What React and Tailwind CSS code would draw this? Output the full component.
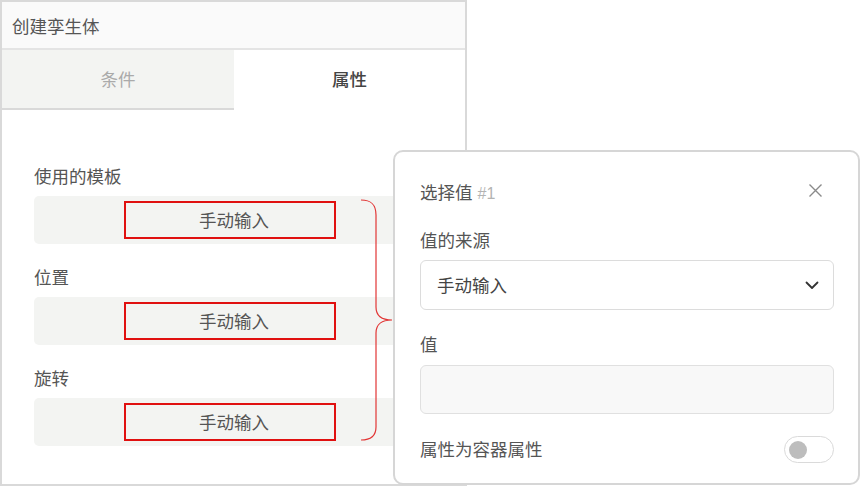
import React from "react";

const font = { fontFamily: '"Noto Sans CJK SC", "Noto Sans", sans-serif' };

function Field({ label }) {
  return (
    <div className="flex flex-col">
      <div className="h-[20px] text-[17.5px] leading-[20px] text-[#555]">{label}</div>
      <div className="mt-[10px] h-[48px] w-[392px] rounded-[5px] bg-[#f3f4f2] flex items-center justify-center">
        <div className="w-[212px] h-[38px] border-2 border-[#e01010] flex items-center justify-center pl-[8px] text-[17.5px] text-[#555]">
          手动输入
        </div>
      </div>
    </div>
  );
}

export default function App() {
  return (
    <div className="relative w-[861px] h-[486px] bg-white overflow-hidden" style={font}>
      <div className="w-[467px] h-[486px] border-2 border-[#d9d9d9] flex flex-col">
        <div className="h-[48px] bg-[#fafafa] border-b-2 border-[#e4e4e4] flex items-center pl-[10px] pt-[3px] text-[17.5px] text-[#555]">
          创建孪生体
        </div>
        <div className="flex h-[60px]">
          <div className="w-[232px] bg-[#f3f4f2] border-b-2 border-[#d9d9d9] flex items-center justify-center text-[17.5px] text-[#aaa]">
            条件
          </div>
          <div className="flex-1 bg-white flex items-center justify-center text-[17.5px] font-medium text-[#444] pb-[2px]">
            属性
          </div>
        </div>
        <div className="flex flex-col gap-[23px] pl-[32px] pt-[56px]">
          <Field label="使用的模板" />
          <Field label="位置" />
          <Field label="旋转" />
        </div>
      </div>

      <svg className="absolute left-[355px] top-[195px]" width="45" height="252" viewBox="0 0 45 252">
        <path
          d="M6 5 C 16 5, 21 9, 21 20 L 21 112 C 21 121, 27 125, 37 125 C 27 125, 21 129, 21 138 L 21 232 C 21 241, 16 245, 6 245"
          fill="none"
          stroke="#e23535"
          strokeWidth="1.2"
        />
      </svg>

      <div className="absolute left-[393px] top-[150px] w-[467px] h-[335px] bg-white border-2 border-[#d6d6d6] rounded-[10px] pl-[25px] pr-[24px] pt-[28px] flex flex-col">
        <div className="flex items-center justify-between h-[24px]">
          <div className="flex items-baseline">
            <span className="text-[17.5px] text-[#555]">选择值</span>
            <span className="ml-[5px] text-[16px] text-[#b3b3b3]" style={{ fontFamily: '"Liberation Sans", sans-serif' }}>#1</span>
          </div>
          <svg className="mr-[11px] -mt-[4px]" width="15" height="15" viewBox="0 0 15 15">
            <path d="M1.5 1.5 L13.5 13.5 M13.5 1.5 L1.5 13.5" stroke="#8a8a8a" strokeWidth="1.4" fill="none" />
          </svg>
        </div>
        <div className="mt-[26px] h-[20px] text-[17.5px] leading-[20px] text-[#555]">值的来源</div>
        <div className="mt-[10px] h-[50px] rounded-[6px] border border-[#dcdcdc] bg-white flex items-center justify-between pl-[16px] pr-[14px]">
          <span className="text-[17.5px] text-[#444]">手动输入</span>
          <svg width="14" height="9" viewBox="0 0 14 9">
            <path d="M1.5 1.5 L7 7 L12.5 1.5" stroke="#333" strokeWidth="1.8" fill="none" strokeLinecap="round" strokeLinejoin="round" />
          </svg>
        </div>
        <div className="mt-[24px] h-[20px] text-[17.5px] leading-[20px] text-[#555]">值</div>
        <div className="mt-[11px] h-[49px] rounded-[6px] border border-[#e0e0e0] bg-[#f8f8f8]" />
        <div className="mt-[22px] h-[27px] flex items-center justify-between">
          <span className="text-[17.5px] text-[#555]">属性为容器属性</span>
          <div className="w-[50px] h-[27px] rounded-full border border-[#dadada] bg-white flex items-center pl-[4px]">
            <div className="w-[18px] h-[18px] rounded-full bg-[#bdbdbd]" />
          </div>
        </div>
      </div>
    </div>
  );
}
